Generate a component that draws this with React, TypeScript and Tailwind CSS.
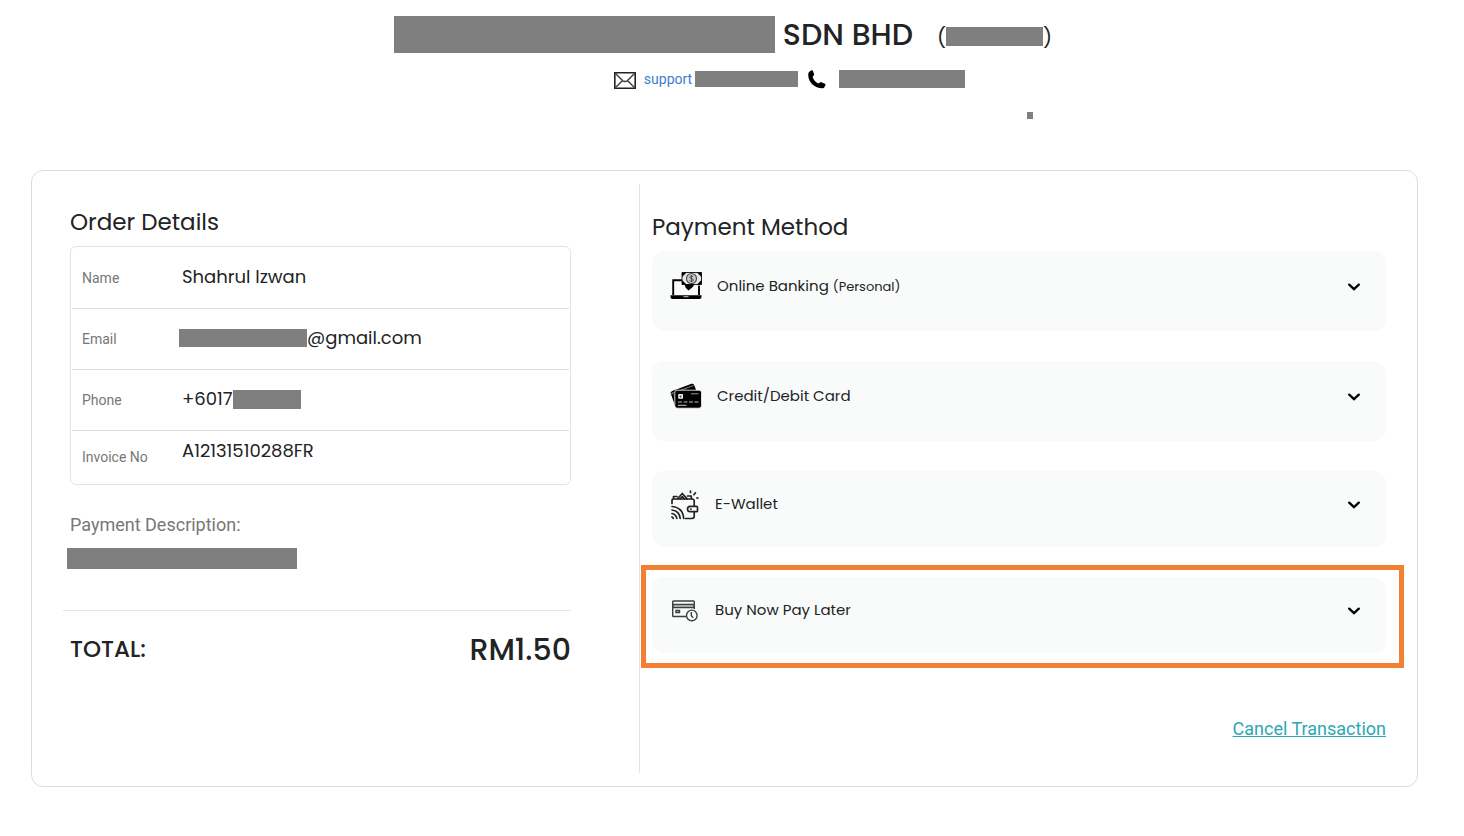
import type { ReactNode } from "react";

function Mask({ className }: { className: string }) {
  return <span aria-hidden="true" className={`block shrink-0 bg-[#7f7f7f] ${className}`} />;
}

function MailIcon() {
  return (
    <svg className="mt-0.5" width="22" height="17" viewBox="0 0 22 17" fill="none" stroke="#222" strokeWidth="1.6" aria-hidden="true">
      <path d="M.8.8h20.4v15.4H.8z" />
      <path d="M1 1l8 8q1.200 1 2 .2.800.8 2-.2l8-8M1 16l7.400-7.200M21 16l-7.400-7.200" strokeWidth="1.500" stroke="#444" />
    </svg>
  );
}

function PhoneIcon() {
  return (
    <svg width="18" height="19" viewBox="0 0 18 19" fill="#000" aria-hidden="true">
      <path d="M1.600 1.500 3.700.3c.5-.3 1 0 1.200.5l1.200 3.400c.2.5 0 1-.4 1.300L4.600 6.400c.5 3 3 6 6 7.200l1.500-1.200c.4-.4.9-.4 1.300-.2l3.500 1.500c.7.3.9.8.6 1.400l-1 1.900c-.4.9-1.200 1.300-2.200 1.300C6.500 18.300-.5 11.500.3 3.700c.1-1 .5-1.700 1.300-2.200z" />
    </svg>
  );
}

function BankingIcon() {
  return (
    <svg width="32" height="28" viewBox="0 0 32 28" aria-hidden="true">
      <path d="M12 8.200H3.200V23M29 13.500V23" fill="none" stroke="#000" strokeWidth="1.900" />
      <path d="M.5 23.300h31v1.600q0 2-2 2h-27q-2 0-2-2z" fill="#000" />
      <path d="M13.500 24.700h5" stroke="#ccc" strokeWidth="1" />
      <path d="M12 .5h19.500V12.500H12z" fill="#e5e5e5" stroke="#222" strokeWidth="1" />
      <path d="M12 .5h4.500L12 5zM31.500.5V5L27 .5zM31.500 12.500H27l4.500-4.500zM12 12.500V8l4.500 4.500z" fill="#000" />
      <circle cx="21.500" cy="6.500" r="5" fill="#ccc" stroke="#444" strokeWidth="1.100" />
      <path d="M23.300 4.900q-.5-1-1.800-1-1.800 0-1.800 1.300t1.800 1.400 1.900 1.400-1.900 1.400q-1.400 0-1.900-1M21.500 3v7.200" fill="none" stroke="#444" strokeWidth=".9" />
      <path d="M14.500 12.300h7.500q1.500-.6 2.500.2l-2.300 3-3.700 3-3-3z" fill="#000" />
    </svg>
  );
}

function CardsIcon() {
  return (
    <svg width="32" height="26" viewBox="0 0 32 26" aria-hidden="true">
      <path d="M1.600 8.200 21.500.8q1.800-.6 2.600 1.100l2 5L5 15.500z" fill="#000" />
      <path d="M.7 10.400q-.4-1.400.9-2.200L5 15.500v7z" fill="#000" />
      <path d="M1 10.800 23.500 2.500" stroke="#aaa" strokeWidth=".8" />
      <rect x="4.800" y="7.200" width="26.700" height="18" rx="2.400" fill="#000" stroke="#f9fbfa" strokeWidth=".8" />
      <rect x="8.200" y="11" width="4.800" height="4.800" rx=".8" fill="#eee" />
      <path d="M10.600 12v3M9.200 13.400h2.800" stroke="#555" strokeWidth=".7" />
      <path d="M21 10.800h7.500" stroke="#999" strokeWidth="1" />
      <path d="M8 19h20.500" stroke="#bbb" strokeWidth="1.100" strokeDasharray="4 1.500" />
      <path d="M8 22.300h8.500" stroke="#bbb" strokeWidth="1.100" />
    </svg>
  );
}

function WalletIcon() {
  return (
    <svg className="mt-0.5" width="28" height="30" viewBox="0 0 28 30" fill="none" stroke="#222" strokeWidth="1.700" strokeLinecap="round" strokeLinejoin="round" aria-hidden="true">
      <path d="M1 13.500V10.200Q1 9 2.200 9H21q2.200 0 2.200 2.200v4.600M23.200 22v4.300q0 2.200-2.200 2.200h-6.500" />
      <path d="M2.500 8.800V6.500H6M6.500 8.800l4.800-5.300 4.800 5.300M16.500 6h3.800v2.800M9 9l2.300-2.400L13.600 9" />
      <path d="M25.500 16.300h-6.300q-2.700 0-2.700 2.700t2.700 2.700h6.300q1 0 1-1v-3.400q0-1-1-1z" />
      <path d="M19.600 19h.5" />
      <path d="M1 16.500q11 1 11.700 12M1 20q7.600 1 8.200 8.500M1 23.500q4.200.8 4.800 5M1 27q1 .4 1.300 1.500" />
      <path d="M19.500 1v1.500M24.500 2.800l-1.600 1.900M27 8h-1.200" />
    </svg>
  );
}

function PayLaterIcon() {
  return (
    <svg className="mt-0.5" width="26" height="22" viewBox="0 0 26 22" fill="none" stroke="#3c3f3f" strokeWidth="1.400" aria-hidden="true">
      <path d="M14 16.500H1.500q-.8 0-.8-.8V1.800q0-.8.8-.8h20q.8 0 .8.8V9" />
      <path d="M1 4.500h21v3H1z" fill="#ccc" />
      <path d="M4 10.500h3.500v2H4z" />
      <circle cx="19.800" cy="15.400" r="5.300" fill="#f9fbfa" />
      <path d="M19.300 12v3.700l1.900 2" />
    </svg>
  );
}

function Chevron() {
  return (
    <svg className="mt-0.5" width="14" height="10" viewBox="0 0 14 10" fill="none" stroke="#000" strokeWidth="2.300" strokeLinecap="round" aria-hidden="true">
      <path d="m2.200 2.600 4.800 4.500 4.800-4.500" />
    </svg>
  );
}

function DetailRow({ label, children }: { label: string; children: ReactNode }) {
  return (
    <div className="flex h-[61px] items-center border-b border-[#d9dfdf] pl-[10px]">
      <dt className="w-[100px] shrink-0 text-sm text-[#777]">{label}</dt>
      <dd className="flex items-center pb-0.5 font-['Poppins','Inter',sans-serif] text-lg">{children}</dd>
    </div>
  );
}

function Method({ icon, children, className }: { icon: ReactNode; children: ReactNode; className: string }) {
  return (
    <button type="button" className={`flex w-full items-center rounded-xl bg-[#f9fbfa] pr-[25px] pb-[10px] pl-[18px] text-left font-['Poppins','Inter',sans-serif] text-[15px] ${className}`}>
      <span className="flex min-w-[30px] justify-center">{icon}</span>
      <span className="ml-[15px] flex-1">{children}</span>
      <Chevron />
    </button>
  );
}

export default function App() {
  return (
    <div className="min-h-screen bg-white pr-[46px] pb-12 pl-[31px] font-['Roboto',sans-serif] text-[#212325]">
      <header className="flex h-[170px] flex-col items-center pt-4">
        <h1 className="flex h-[37px] items-center pr-[3px] font-['Poppins','Inter',sans-serif] text-[30px] leading-[37px] font-medium">
          <Mask className="h-[37px] w-[381px]" />
          <span className="ml-2">SDN BHD</span>
          <span className="ml-6 flex items-center pt-1 text-xl font-normal">
            (<Mask className="h-[19px] w-[97px]" />)
          </span>
        </h1>
        <div className="mt-4 flex h-5 items-center pl-[130px] text-sm">
          <MailIcon />
          <a href="#support" className="ml-2 flex items-center text-[#3b7dd0]">
            support
            <Mask className="ml-[3px] h-4 w-[103px]" />
          </a>
          <span className="ml-[10px]"><PhoneIcon /></span>
          <Mask className="ml-[13px] h-[18px] w-[126px]" />
        </div>
        <Mask className="mt-[23px] ml-[611px] h-[7px] w-[6px]" />
      </header>

      <main className="flex rounded-xl border border-[#d5dfdf] py-[13px]">
        <section className="w-[43.9%] border-r border-[#e0e5e5] pt-[21px] pr-[68px] pl-[38px]">
          <h2 className="font-['Poppins','Inter',sans-serif] text-[23px] leading-[35px]">Order Details</h2>
          <dl className="mt-[6px] rounded-md border border-[#e0e5e5] px-px pt-px">
            <DetailRow label="Name">Shahrul Izwan</DetailRow>
            <DetailRow label="Email">
              <Mask className="-ml-[3px] h-[18px] w-32" />@gmail.com
            </DetailRow>
            <DetailRow label="Phone">
              +6017<Mask className="h-[19px] w-[68px]" />
            </DetailRow>
            <div className="flex h-[53px] pl-[10px]">
              <dt className="w-[100px] shrink-0 pt-4 text-sm text-[#777]">Invoice No</dt>
              <dd className="pt-[6px] font-['Poppins','Inter',sans-serif] text-lg">A12131510288FR</dd>
            </div>
          </dl>
          <p className="mt-[26px] text-lg text-[#777]">Payment Description:</p>
          <Mask className="mt-[9px] -ml-[3px] h-[21px] w-[230px]" />
          <div className="mt-[41px] -ml-[7px] flex items-center justify-between border-t border-[#e0e5e5] pt-4 pl-[7px] font-['Poppins','Inter',sans-serif] font-medium">
            <span className="text-[23px]">TOTAL:</span>
            <span className="text-[30px] leading-[45px]">RM1.50</span>
          </div>
        </section>

        <section className="flex-1 pt-[26px] pr-[31px] pb-[30px] pl-3">
          <h2 className="font-['Poppins','Inter',sans-serif] text-[23px] leading-[35px]">Payment Method</h2>
          <div className="mt-[6px] flex flex-col gap-[30px]">
            <Method icon={<BankingIcon />} className="h-20">
              Online Banking <span className="text-[13px]">(Personal)</span>
            </Method>
            <Method icon={<CardsIcon />} className="h-20">Credit/Debit Card</Method>
            <Method icon={<WalletIcon />} className="h-[76px]">E-Wallet</Method>
            <div className="relative">
              <Method icon={<PayLaterIcon />} className="h-[76px]">Buy Now Pay Later</Method>
              <span aria-hidden="true" className="pointer-events-none absolute -top-3 -right-[18px] -bottom-[15px] -left-[11px] border-5 border-[#f28033]" />
            </div>
          </div>
          <div className="mt-[62px] text-right">
            <a href="#cancel" className="text-lg text-[#2ba8b4] underline">Cancel Transaction</a>
          </div>
        </section>
      </main>
    </div>
  );
}
